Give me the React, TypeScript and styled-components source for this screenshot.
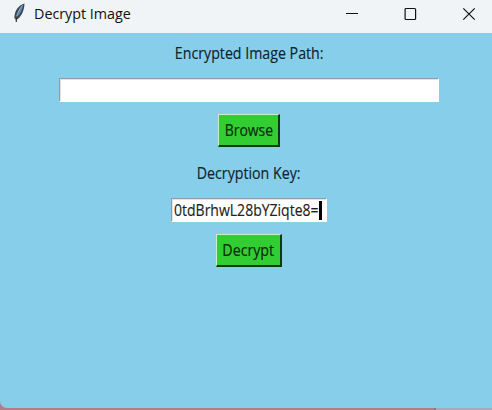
import React from "react";
import styled, { createGlobalStyle } from "styled-components";

const Global = createGlobalStyle`
  body { margin: 0; overflow: hidden; }
  * { box-sizing: border-box; }
`;

const Desktop = styled.div`
  width: 492px;
  height: 410px;
  background: linear-gradient(90deg, #b67c86 0 434px, #777f8c 434px 436px, #a3adb9 436px);
  font-family: "Open Sans", "Noto Sans", sans-serif;
`;

const Window = styled.main`
  height: 408px;
  display: flex;
  flex-direction: column;
  background: #87ceeb;
  border-bottom-left-radius: 7px;
  overflow: hidden;
`;

const TitleBar = styled.header`
  height: 33px;
  flex: none;
  display: flex;
  align-items: flex-start;
  background: #f0f4f6;
`;

const Feather = styled.svg`
  width: 14px;
  height: 22px;
  margin: 2px 0 0 12px;
  flex: none;
`;

const Text = styled.span<{ $scale: number }>`
  display: block;
  white-space: nowrap;
  transform: scaleX(${(p) => p.$scale});
`;

const Title = styled.div`
  flex: none;
  width: 97px;
  margin: 4px 0 0 8px;
  font-size: 14.5px;
  line-height: 20px;
  color: #111;
  ${Text} { transform-origin: left; }
`;

const Controls = styled.div`
  margin-left: auto;
  display: flex;
  padding: 7px 16px 0 0;
  gap: 44.5px;
`;

const ControlIcon = styled.svg`
  width: 14px;
  height: 14px;
  fill: none;
  stroke: #111;
  stroke-width: 1.2;
`;

const Form = styled.div`
  width: 498px;
  display: flex;
  flex-direction: column;
  align-items: center;
  padding-top: 9px;
`;

const Label = styled.label`
  height: 24px;
  line-height: 22px;
  font-size: 15.5px;
  color: #10232b;
  -webkit-text-stroke: 0.15px;
`;

const Entry = styled.div<{ $width: number }>`
  width: ${(p) => p.$width}px;
  height: 24px;
  margin: 12px 0;
  display: flex;
  align-items: center;
  padding-left: 2px;
  background: #fff;
  border: 1px solid;
  border-color: #919ba2 #fff #fff #919ba2;
  box-shadow: inset 1px 1px #e3e3e3;
  font-size: 15.5px;
  line-height: 20px;
  color: #222;
  -webkit-text-stroke: 0.15px;
  ${Text} { transform-origin: left; width: 145px; flex: none; }
`;

const Caret = styled.span`
  width: 3px;
  height: 19px;
  background: #000;
`;

const Button = styled.button<{ $width: number }>`
  width: ${(p) => p.$width}px;
  height: 33px;
  margin: 0 0 15px;
  padding: 0;
  display: flex;
  justify-content: center;
  align-items: center;
  background: #32cd32;
  border: solid;
  border-width: 1px 2px 2px 1px;
  border-color: #c3f2c5 #083b14 #083b14 #c3f2c5;
  font: 15.5px/20px "Open Sans", "Noto Sans", sans-serif;
  color: #07280c;
  -webkit-text-stroke: 0.15px;
`;

export default function App() {
  return (
    <>
      <Global />
      <Desktop>
        <Window>
          <TitleBar>
            <Feather viewBox="0 0 14 22">
              <path d="M12.5 1.5C7 3 2.5 8 2.3 16L4 18C9 16 12.5 8 12.5 1.5Z" fill="#3b4652" />
              <path d="M10.8 3.2C7 6.5 5.3 10 4.7 15C8.6 11.7 10.5 7.5 10.8 3.2Z" fill="#568bc0" />
              <path d="M10.6 3.3C6.5 8 4.5 13 4 18" fill="none" stroke="#9aadbc" strokeWidth="1" />
              <path d="M4.6 14.5L4.2 20" stroke="#333" strokeWidth="1.2" />
            </Feather>
            <Title><Text $scale={0.987}>Decrypt Image</Text></Title>
            <Controls>
              <ControlIcon viewBox="0 0 14 14"><path d="M1 6.5H13" /></ControlIcon>
              <ControlIcon viewBox="0 0 14 14"><rect x="1.1" y="1.5" width="10.5" height="11" rx="1" /></ControlIcon>
              <ControlIcon viewBox="0 0 14 14"><path d="M1.3 1.3L12.7 12.7M12.7 1.3L1.3 12.7" /></ControlIcon>
            </Controls>
          </TitleBar>
          <Form>
            <Label><Text $scale={0.916}>Encrypted Image Path:</Text></Label>
            <Entry $width={380} />
            <Button type="button" $width={62}><Text $scale={0.9}>Browse</Text></Button>
            <Label><Text $scale={0.916}>Decryption Key:</Text></Label>
            <Entry $width={156}>
              <Text $scale={0.904}>0tdBrhwL28bYZiqte8=</Text>
              <Caret />
            </Entry>
            <Button type="button" $width={66}><Text $scale={0.916}>Decrypt</Text></Button>
          </Form>
        </Window>
      </Desktop>
    </>
  );
}
